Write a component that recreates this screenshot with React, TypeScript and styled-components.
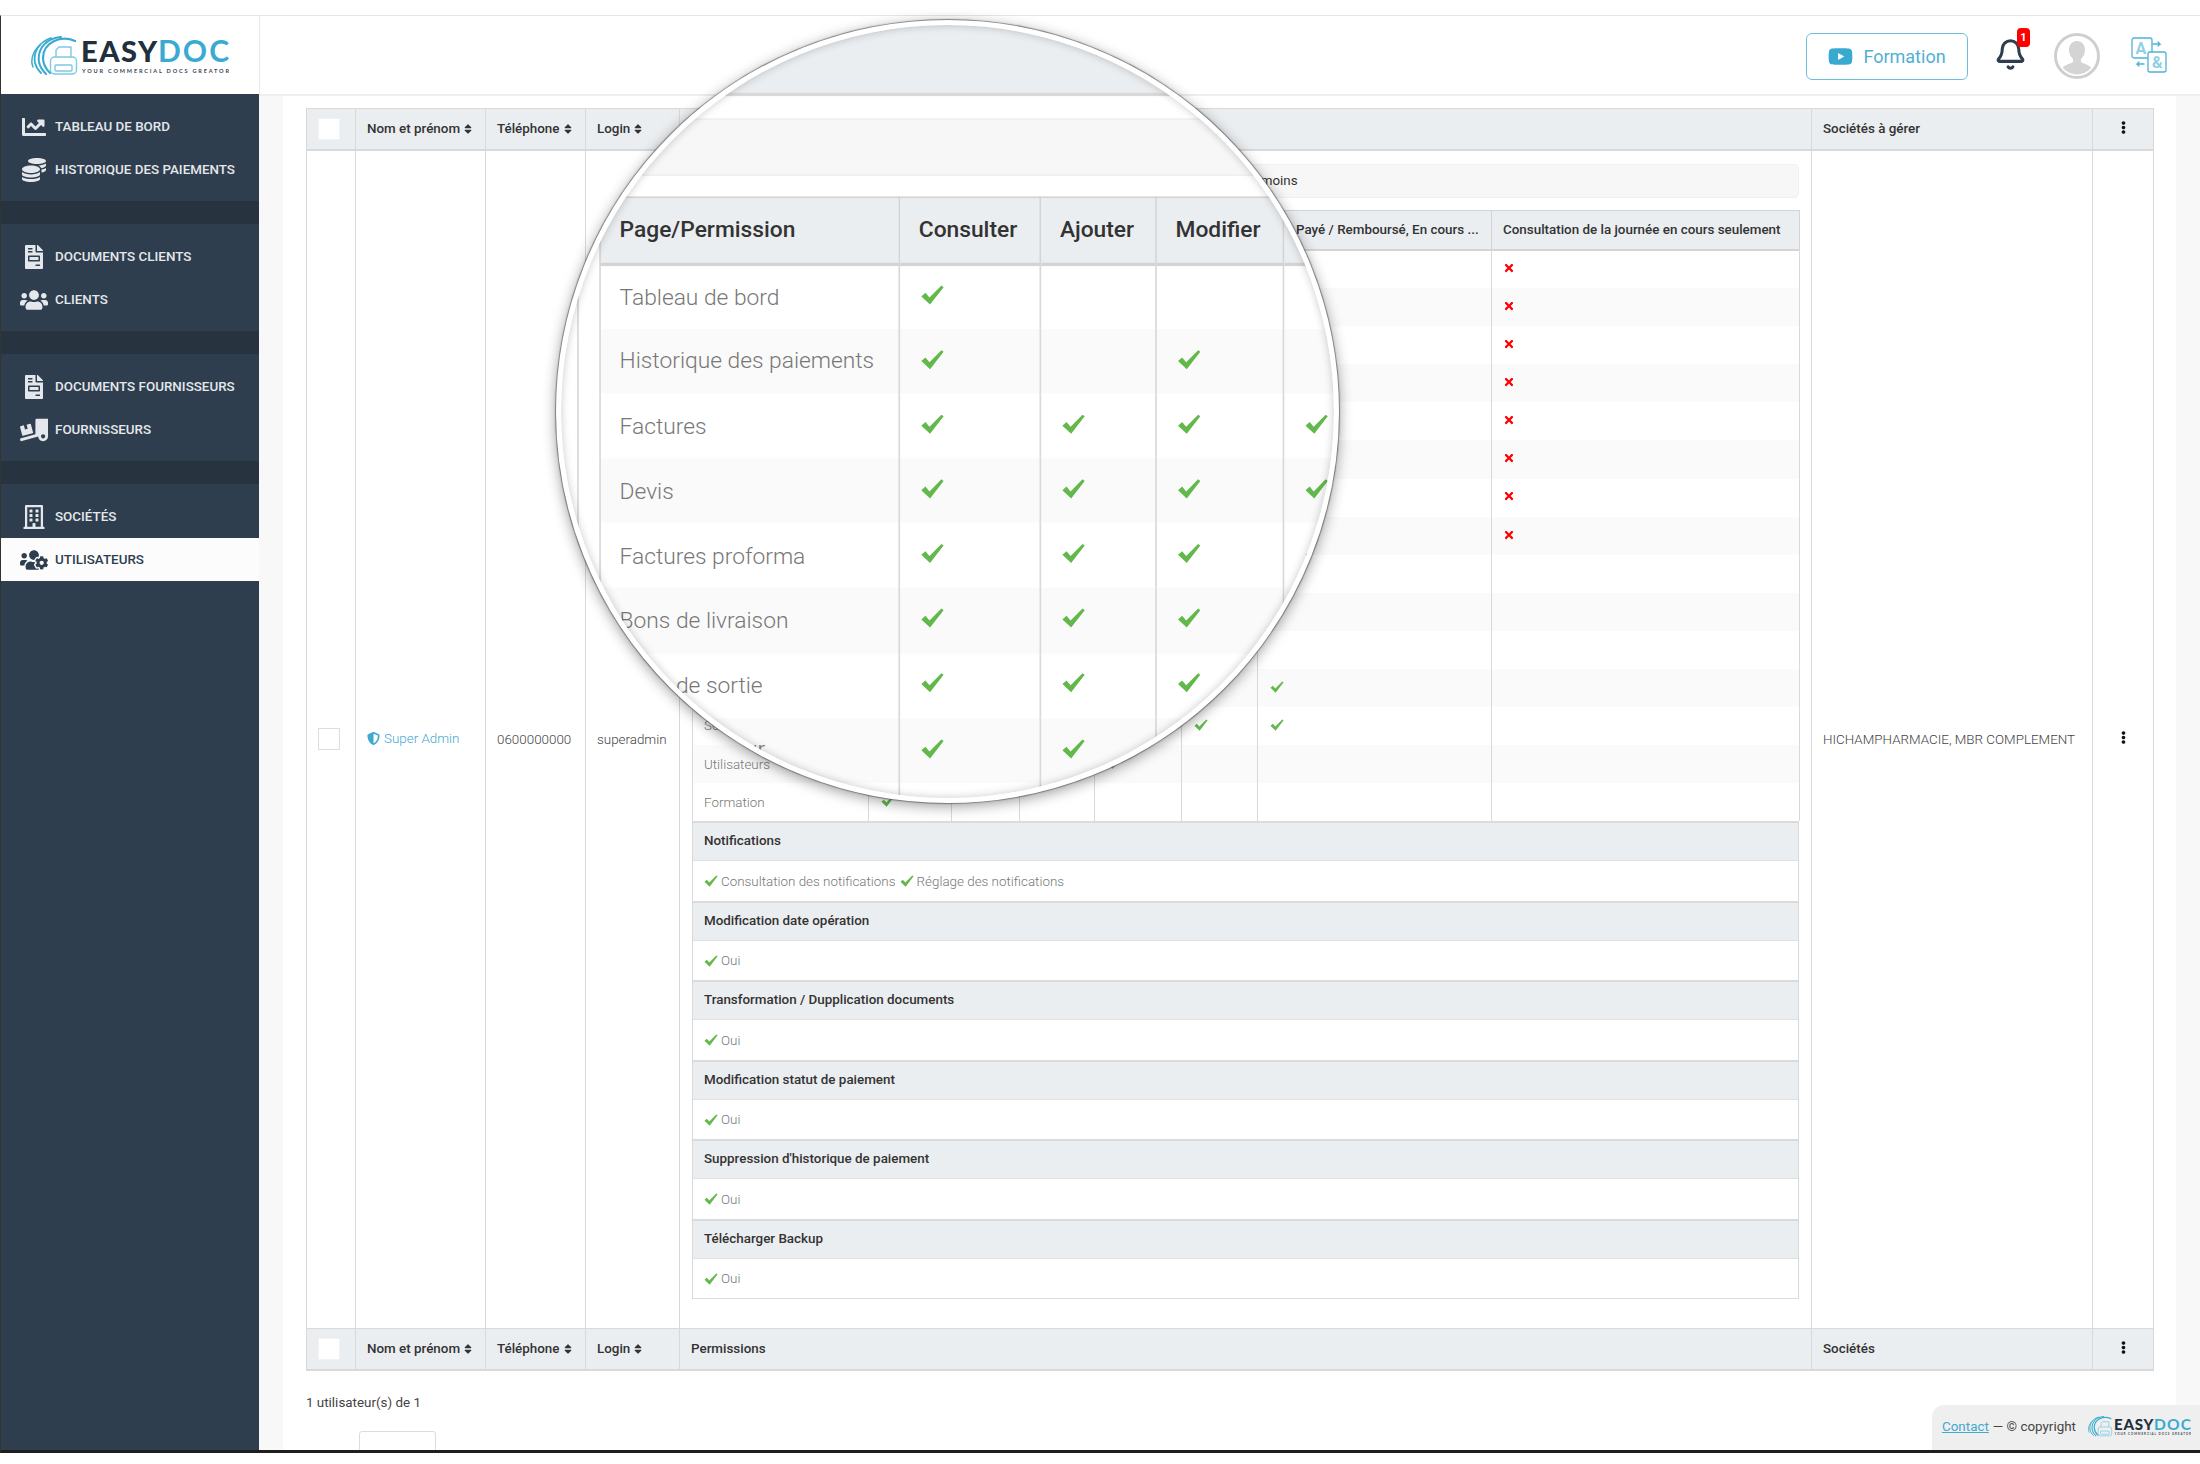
import styled, { createGlobalStyle } from 'styled-components';
import { Bell } from 'lucide-react';
import {
  FaChartLine,
  FaCoins,
  FaEllipsisV,
  FaFileInvoice,
  FaRegBuilding,
  FaShieldAlt,
  FaSort,
  FaTimes,
  FaTruckLoading,
  FaUsers,
  FaUsersCog,
  FaYoutube,
} from 'react-icons/fa';

const navGroups = [
  [
    { label: 'Tableau de bord', icon: <FaChartLine size={24} /> },
    { label: 'Historique des paiements', icon: <FaCoins size={24} /> },
  ],
  [
    { label: 'Documents clients', icon: <FaFileInvoice size={24} /> },
    { label: 'Clients', icon: <FaUsers size={28} /> },
  ],
  [
    { label: 'Documents fournisseurs', icon: <FaFileInvoice size={24} /> },
    { label: 'Fournisseurs', icon: <FaTruckLoading size={28} /> },
  ],
  [
    { label: 'Sociétés', icon: <FaRegBuilding size={24} /> },
    { label: 'Utilisateurs', icon: <FaUsersCog size={28} />, active: true },
  ],
];

// 1 = green check in that column, last flag = red cross in the final column
const permissions: [string, string, boolean][] = [
  ['Tableau de bord', '100000', true],
  ['Historique des paiements', '101000', true],
  ['Factures', '111100', true],
  ['Devis', '111100', true],
  ['Factures proforma', '111100', true],
  ['Bons de livraison', '111000', true],
  ['Bons de sortie', '111000', true],
  ['Bons de retour', '111000', true],
  ['Bons de commande', '000000', false],
  ['Clients', '000000', false],
  ['Fournisseurs', '000000', false],
  ['Documents clients', '111101', false],
  ['Sociétés', '111111', false],
  ['Utilisateurs', '111100', false],
  ['Formation', '100000', false],
];

const sections = [
  { title: 'Notifications', items: ['Consultation des notifications', 'Réglage des notifications'] },
  { title: 'Modification date opération', items: ['Oui'] },
  { title: 'Transformation / Dupplication documents', items: ['Oui'] },
  { title: 'Modification statut de paiement', items: ['Oui'] },
  { title: "Suppression d'historique de paiement", items: ['Oui'] },
  { title: 'Télécharger Backup', items: ['Oui'] },
];

const outerCols = [49, 130, 100, 94, 1132, 281, 61];
const permCols = [176, 83, 68, 75, 87, 76, 234, 308];

const Logo = ({ width }: { width: number }) => (
  <svg width={width} viewBox="0 0 198 41" fill="none">
    <g stroke="#3aabd0" strokeLinecap="round">
      <path d="M44 5C30-1 12 6 12 22c0 6 3 11 7 15" strokeWidth="2.2" />
      <path d="M30 1C16 2 6 12 8 26c1 5 4 9 7 12" strokeWidth="2" />
      <path d="M20 2C8 6 2 16 4 27c1 4 3 7 6 10" strokeWidth="1.8" />
      <path d="M9 9C2 15-1 24 2 31" strokeWidth="1.5" />
    </g>
    <g stroke="#7cc9e3" strokeWidth="1.4">
      <path d="M25 21V14l3-3h12v10" />
      <rect x="19.5" y="21" width="26" height="17" rx="4" />
      <rect x="24" y="29" width="17" height="6" rx="1" />
    </g>
    <text x="50" y="26" fontFamily="Lato, sans-serif" fontWeight="900" fontSize="29" fill="#22303e" textLength="76" lengthAdjust="spacing">
      EASY
    </text>
    <text x="127" y="26" fontFamily="Lato, sans-serif" fontWeight="700" fontSize="30" fill="#3aabd0" textLength="71" lengthAdjust="spacing">
      DOC
    </text>
    <text x="51" y="37" fontFamily="Lato, sans-serif" fontWeight="700" fontSize="5.6" fill="#3a4754" textLength="147" lengthAdjust="spacing">
      YOUR COMMERCIAL DOCS GREATOR
    </text>
  </svg>
);

const Avatar = () => (
  <svg width="46" height="46" viewBox="0 0 46 46">
    <defs>
      <clipPath id="avatar-clip">
        <circle cx="23" cy="23" r="18.5" />
      </clipPath>
    </defs>
    <circle cx="23" cy="23" r="21.5" fill="#fff" stroke="#cfcfcf" strokeWidth="3" />
    <circle cx="23" cy="23" r="18.5" fill="#fff" />
    <g clipPath="url(#avatar-clip)" fill="#d4d4d4">
      <path d="M23 8c-5 0-8 4-8 9 0 4 2 7 4 9v3c-3 2-10 3-12 8v6h32v-6c-2-5-9-6-12-8v-3c2-2 4-5 4-9 0-5-3-9-8-9z" />
    </g>
  </svg>
);

const TranslateIcon = () => (
  <svg width="36" height="36" viewBox="0 0 36 36" fill="none" stroke="#4fb3d6" strokeWidth="1.3">
    <rect x="1" y="1" width="20" height="20" rx="2" />
    <text x="4.5" y="17" fontFamily="Roboto, sans-serif" fontWeight="700" fontSize="16" fill="#8fd0e6" stroke="none">
      A
    </text>
    <rect x="17" y="15" width="18" height="20" rx="2" fill="#fff" />
    <text x="21" y="31" fontFamily="Roboto, sans-serif" fontWeight="700" fontSize="16" fill="#8fd0e6" stroke="none">
      &amp;
    </text>
    <path d="M22 7h7l-2-2M29 7l-2 2M13 27H6l2-2M6 27l2 2" strokeLinecap="round" />
  </svg>
);

const CheckMark = () => (
  <CheckSvg viewBox="0 0 16 14">
    <path d="M0.4 8 3.2 5.5 6 8.8 14.2 0.5 15.7 1.6 6.4 13.6Z" />
  </CheckSvg>
);

const SortLabel = ({ children }: { children: string }) => (
  <HeadLabel>
    {children}
    <FaSort size={12} />
  </HeadLabel>
);

const PermissionTable = () => (
  <PermTable>
    <colgroup>
      {permCols.map((w, i) => (
        <Col key={i} $w={w} />
      ))}
    </colgroup>
    <thead>
      <tr>
        <PermHead>Page/Permission</PermHead>
        <PermHead>Consulter</PermHead>
        <PermHead>Ajouter</PermHead>
        <PermHead>Modifier</PermHead>
        <PermHead>Supprimer</PermHead>
        <PermHead>Valider</PermHead>
        <PermHead>Etat Payé / Remboursé, En cours ...</PermHead>
        <PermHead>Consultation de la journée en cours seulement</PermHead>
      </tr>
    </thead>
    <tbody>
      {permissions.map(([name, checks, cross]) => (
        <PermRow key={name}>
          <PermCell>{name}</PermCell>
          {checks.split('').map((c, i) => (
            <PermCell key={i}>{c === '1' && <CheckMark />}</PermCell>
          ))}
          <PermCell>{cross && <CrossMark size={12} />}</PermCell>
        </PermRow>
      ))}
    </tbody>
  </PermTable>
);

const UsersTable = () => (
  <Table>
    <colgroup>
      {outerCols.map((w, i) => (
        <Col key={i} $w={w} />
      ))}
    </colgroup>
    <thead>
      <tr>
        <HeadCell>
          <CheckBox $filled />
        </HeadCell>
        <HeadCell>
          <SortLabel>Nom et prénom</SortLabel>
        </HeadCell>
        <HeadCell>
          <SortLabel>Téléphone</SortLabel>
        </HeadCell>
        <HeadCell>
          <SortLabel>Login</SortLabel>
        </HeadCell>
        <HeadCell>Permissions</HeadCell>
        <HeadCell>Sociétés à gérer</HeadCell>
        <HeadCell $center>
          <FaEllipsisV size={13} color="#111" />
        </HeadCell>
      </tr>
    </thead>
    <tbody>
      <tr>
        <BodyCell>
          <CheckBox />
        </BodyCell>
        <BodyCell>
          <UserName>
            <FaShieldAlt size={13} />
            Super Admin
          </UserName>
        </BodyCell>
        <BodyCell>0600000000</BodyCell>
        <BodyCell>superadmin</BodyCell>
        <PermissionsCell>
          <ToggleBar>Afficher en moins</ToggleBar>
          <PermissionTable />
          {sections.map(s => (
            <Section key={s.title}>
              <SectionTitle>{s.title}</SectionTitle>
              <SectionBody>
                {s.items.map(item => (
                  <SectionItem key={item}>
                    <CheckMark />
                    {item}
                  </SectionItem>
                ))}
              </SectionBody>
            </Section>
          ))}
        </PermissionsCell>
        <BodyCell>HICHAMPHARMACIE, MBR COMPLEMENT</BodyCell>
        <BodyCell $center>
          <FaEllipsisV size={13} color="#111" />
        </BodyCell>
      </tr>
    </tbody>
    <tfoot>
      <tr>
        <HeadCell>
          <CheckBox $filled />
        </HeadCell>
        <HeadCell>
          <SortLabel>Nom et prénom</SortLabel>
        </HeadCell>
        <HeadCell>
          <SortLabel>Téléphone</SortLabel>
        </HeadCell>
        <HeadCell>
          <SortLabel>Login</SortLabel>
        </HeadCell>
        <HeadCell>Permissions</HeadCell>
        <HeadCell>Sociétés</HeadCell>
        <HeadCell $center>
          <FaEllipsisV size={13} color="#111" />
        </HeadCell>
      </tr>
    </tfoot>
  </Table>
);

const App = () => {
  return (
    <Page>
      <GlobalStyle />
      <Frame>
        <Header>
          <LogoBox>
            <Logo width={198} />
          </LogoBox>
          <HeaderActions>
            <FormationButton>
              <FaYoutube size={25} color="#3aa9d0" />
              Formation
            </FormationButton>
            <BellWrapper>
              <Bell size={33} color="#2f3e4e" strokeWidth={2.2} />
              <BellBadge>1</BellBadge>
            </BellWrapper>
            <AvatarWrapper>
              <Avatar />
            </AvatarWrapper>
            <TranslateIcon />
          </HeaderActions>
        </Header>
        <Body>
          <Sidebar>
            {navGroups.map((group, i) => (
              <NavGroup key={i}>
                {group.map(item => (
                  <NavItem key={item.label} $active={item.active}>
                    <NavIcon>{item.icon}</NavIcon>
                    {item.label}
                  </NavItem>
                ))}
              </NavGroup>
            ))}
          </Sidebar>
          <Gutter>
            <Main>
              <UsersTable />
              <CountText>1 utilisateur(s) de 1</CountText>
              <PagerBox />
            </Main>
          </Gutter>
        </Body>
        <FooterNote>
          <ContactLink>Contact</ContactLink>
          <span>— © copyright</span>
          <Logo width={103} />
        </FooterNote>
      </Frame>
      <Lens aria-hidden>
        <LensContent>
          <UsersTable />
        </LensContent>
        <LensShade />
      </Lens>
    </Page>
  );
};

export default App;

const GlobalStyle = createGlobalStyle`
  html, body {
    margin: 0;
    background: #fff;
    font-family: Roboto, "Liberation Sans", sans-serif;
  }
  * {
    box-sizing: border-box;
  }
`;

const Page = styled.div`
  position: relative;
  width: 2200px;
  height: 1464px;
  padding-top: 15px;
  overflow: hidden;
  background: #fff;
`;

const Frame = styled.div`
  position: relative;
  height: 1438px;
  display: flex;
  flex-direction: column;
  overflow: hidden;
  border-top: 1px solid #e6e6e6;
  border-left: 1px solid #333;
  border-bottom: 3px solid #1e1e1e;
`;

const Header = styled.header`
  display: flex;
  height: 78px;
  flex-shrink: 0;
`;

const LogoBox = styled.div`
  width: 259px;
  padding: 20px 0 0 30px;
  border-right: 1px solid #e8e8e8;
`;

const HeaderActions = styled.div`
  flex: 1;
  display: flex;
  justify-content: flex-end;
  align-items: center;
  padding-right: 33px;
`;

const FormationButton = styled.div`
  width: 162px;
  height: 47px;
  margin: 2px 26px 0 0;
  display: flex;
  align-items: center;
  justify-content: center;
  gap: 10px;
  border: 1.5px solid #6cc0dd;
  border-radius: 6px;
  color: #4fb0d4;
  font-size: 18px;
`;

const BellWrapper = styled.div`
  position: relative;
  width: 34px;
  height: 34px;
  margin: 0 26px 0 0;
`;

const BellBadge = styled.span`
  position: absolute;
  top: -10px;
  right: -2px;
  width: 13px;
  height: 19px;
  border-radius: 4px;
  background: #f00;
  color: #fff;
  font-size: 11px;
  font-weight: 700;
  line-height: 19px;
  text-align: center;
`;

const AvatarWrapper = styled.div`
  height: 46px;
  margin: 2px 31px 0 0;
`;

const Body = styled.div`
  flex: 1;
  display: flex;
  min-height: 0;
`;

const Sidebar = styled.nav`
  width: 258px;
  flex-shrink: 0;
  background: #27333f;
  display: flex;
  flex-direction: column;
  gap: 23px;
`;

const NavGroup = styled.div`
  padding: 11px 0 10px;
  background: #2f3e4e;
  &:last-child {
    flex: 1;
  }
`;

const NavItem = styled.div<{ $active?: boolean }>`
  height: 43px;
  display: flex;
  align-items: center;
  gap: 6px;
  padding-left: 18px;
  background: ${p => (p.$active ? '#fcfcfc' : 'transparent')};
  color: ${p => (p.$active ? '#2f3e4e' : '#e4e8ec')};
  font-size: 13.4px;
  font-weight: 500;
  text-transform: uppercase;
`;

const NavIcon = styled.span`
  width: 30px;
  display: flex;
  justify-content: center;
  color: inherit;
`;

const Gutter = styled.div`
  flex: 1;
  min-width: 0;
  padding: 0 24px;
  background: #f8f8f8;
  border-top: 2px solid #eeeeee;
`;

const Main = styled.main`
  height: 100%;
  padding: 12px 23px 0;
  background: #fff;
  overflow: hidden;
`;

const Table = styled.table`
  width: 1847px;
  table-layout: fixed;
  border-collapse: collapse;
  border: 1px solid #d9d9d9;
  background: #fff;
`;

const Col = styled.col<{ $w: number }>`
  width: ${p => p.$w}px;
`;

const HeadCell = styled.th<{ $center?: boolean }>`
  height: 41px;
  padding: 0 11px;
  background: #ebeef1;
  border: 1px solid #d9d9d9;
  border-bottom-width: 2px;
  color: #333;
  font-size: 13.4px;
  font-weight: 500;
  line-height: 1;
  text-align: ${p => (p.$center ? 'center' : 'left')};
  white-space: nowrap;
`;

const HeadLabel = styled.span`
  display: inline-flex;
  align-items: center;
  gap: 2px;
`;

const BodyCell = styled.td<{ $center?: boolean }>`
  padding: 0 11px;
  border: 1px solid #d9d9d9;
  color: #444;
  font-size: 13.4px;
  font-weight: 300;
  text-align: ${p => (p.$center ? 'center' : 'left')};
  white-space: nowrap;
`;

const PermissionsCell = styled.td`
  padding: 13px 12px 29px;
  border: 1px solid #d9d9d9;
  vertical-align: top;
`;

const CheckBox = styled.div<{ $filled?: boolean }>`
  width: 22px;
  height: 22px;
  background: #fff;
  border: 1.5px solid ${p => (p.$filled ? '#f2f2f2' : '#dedede')};
`;

const UserName = styled.span`
  display: inline-flex;
  align-items: center;
  gap: 4px;
  color: #3fa9d0;
`;

const ToggleBar = styled.div`
  height: 34px;
  margin-bottom: 12px;
  background: #f7f7f7;
  border: 1px solid #f0f0f0;
  border-radius: 5px;
  color: #333;
  font-size: 13.4px;
  line-height: 32px;
  text-align: center;
`;

const PermTable = styled.table`
  width: 1107px;
  table-layout: fixed;
  border-collapse: collapse;
  border: 1px solid #d9d9d9;
  border-bottom: 0;
`;

const PermHead = styled.th`
  height: 40px;
  padding: 0 11px;
  background: #ebeef1;
  border: 1px solid #d4d4d4;
  border-bottom-width: 2px;
  color: #333;
  font-size: 13.4px;
  font-weight: 500;
  text-align: left;
  white-space: nowrap;
  overflow: hidden;
`;

const PermRow = styled.tr`
  height: 38.1px;
  &:nth-child(even) {
    background: #fafafa;
  }
`;

const PermCell = styled.td`
  padding: 0 11px;
  border-left: 1px solid #d9d9d9;
  border-right: 1px solid #d9d9d9;
  color: #777;
  font-size: 13.4px;
  font-weight: 300;
  white-space: nowrap;
  line-height: 1;
`;

const CheckSvg = styled.svg`
  display: inline-block;
  width: 14px;
  height: 12px;
  margin-left: 1px;
  flex-shrink: 0;
  fill: #62b84a;
`;

const CrossMark = styled(FaTimes)`
  color: #f00;
`;

const Section = styled.section`
  width: 1107px;
  border-left: 1px solid #d9d9d9;
  border-right: 1px solid #d9d9d9;
  &:last-child {
    border-bottom: 1.5px solid #dcdcdc;
  }
`;

const SectionTitle = styled.div`
  height: 40px;
  padding: 0 11px;
  background: #ebeef1;
  border-top: 2px solid #d9dbdd;
  border-bottom: 1.5px solid #dfe1e3;
  color: #333;
  font-size: 13.4px;
  font-weight: 500;
  line-height: 36px;
`;

const SectionBody = styled.div`
  height: 39.5px;
  display: flex;
  align-items: center;
  gap: 3px;
  padding: 0 10px;
  background: #fff;
`;

const SectionItem = styled.span`
  display: inline-flex;
  align-items: center;
  gap: 3px;
  color: #777;
  font-size: 13.4px;
  font-weight: 300;
`;

const CountText = styled.p`
  margin: 24px 0 0;
  color: #444;
  font-size: 13.4px;
  line-height: 16px;
`;

const PagerBox = styled.div`
  width: 77px;
  height: 30px;
  margin: 20px 0 0 53px;
  background: #fff;
  border: 1px solid #dcdcdc;
  border-radius: 3px;
`;

const FooterNote = styled.footer`
  position: absolute;
  right: 0;
  bottom: 0;
  width: 268px;
  height: 45px;
  display: flex;
  align-items: center;
  gap: 4px;
  padding: 0 0 2px 10px;
  background: #efefef;
  border-top-left-radius: 12px;
  color: #444;
  font-size: 13.4px;
  svg {
    margin-left: 8px;
  }
`;

const ContactLink = styled.a`
  color: #3fa9d0;
  text-decoration: underline;
`;

const Lens = styled.div`
  position: absolute;
  left: 556px;
  top: 20px;
  width: 783px;
  height: 783px;
  overflow: hidden;
  background: #fff;
  border: 5px solid #fff;
  border-radius: 50%;
  box-shadow: 0 0 1px 1px rgba(90, 90, 90, 0.7), 0 3px 14px rgba(0, 0, 0, 0.4);
`;

const LensContent = styled.div`
  position: absolute;
  left: -618.2px;
  top: -2px;
  width: 1847px;
  transform: scale(1.7);
  transform-origin: 0 0;
`;

const LensShade = styled.div`
  position: absolute;
  inset: 0;
  border-radius: 50%;
  box-shadow: inset 0 0 9px rgba(0, 0, 0, 0.22);
`;
